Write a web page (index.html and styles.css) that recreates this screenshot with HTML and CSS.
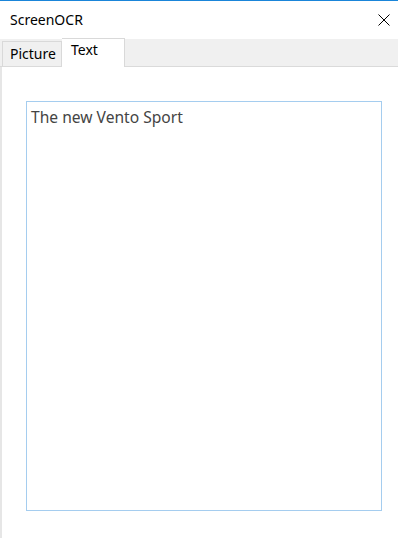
FILE: index.html
```html
<!DOCTYPE html>
<html>
<head>
<meta charset="utf-8">
<link rel="stylesheet" href="styles.css">
</head>
<body>
<div class="window">
  <div class="titlebar">
    <span class="title">ScreenOCR</span>
    <span class="close">
      <svg width="12" height="12" viewBox="0 0 12 12"><path d="M0.5 0.5L11.5 11.5M11.5 0.5L0.5 11.5" stroke="#000" stroke-width="1" fill="none"/></svg>
    </span>
  </div>
  <div class="tabs">
    <div class="tab">Picture</div>
    <div class="tab active">Text</div>
  </div>
  <div class="content">
    <div class="textbox">The new Vento Sport</div>
  </div>
</div>
</body>
</html>
```
FILE: styles.css
```css
html, body {
  margin: 0;
  padding: 0;
  background: #ffffff;
}
.window {
  width: 398px;
  height: 538px;
  box-sizing: border-box;
  border-top: 1px solid #1a85d9;
  display: flex;
  flex-direction: column;
  font-family: "Noto Sans", "Open Sans", sans-serif;
  overflow: hidden;
}
.titlebar {
  height: 38px;
  display: flex;
  align-items: center;
  justify-content: space-between;
  padding: 0 8px 0 10px;
}
.title {
  font-size: 14px;
  color: #000;
  margin-top: -2px;
}
.close {
  display: flex;
  width: 12px;
  height: 12px;
}
.tabs {
  height: 27px;
  background: #f0f0f0;
  border-bottom: 1px solid #dadada;
  display: flex;
  align-items: flex-end;
  padding-left: 2px;
}
.tab {
  height: 25px;
  box-sizing: border-box;
  border: 1px solid #d9d9d9;
  border-bottom: none;
  font-size: 14px;
  color: #000;
  padding: 2px 0 0 7px;
  width: 60px;
  white-space: nowrap;
}
.tab.active {
  background: #ffffff;
  height: 29px;
  width: 63px;
  margin-bottom: -1px;
  padding: 1px 0 0 9px;
  border-left: none;
}
.content {
  flex: 1;
  border-left: 2px solid #e6e6e6;
  padding: 34px 0 0 24px;
}
.textbox {
  width: 356px;
  height: 410px;
  box-sizing: border-box;
  border: 1px solid #a5cdef;
  padding: 4px 4px;
  font-size: 15.6px;
  color: #444;
}
```
